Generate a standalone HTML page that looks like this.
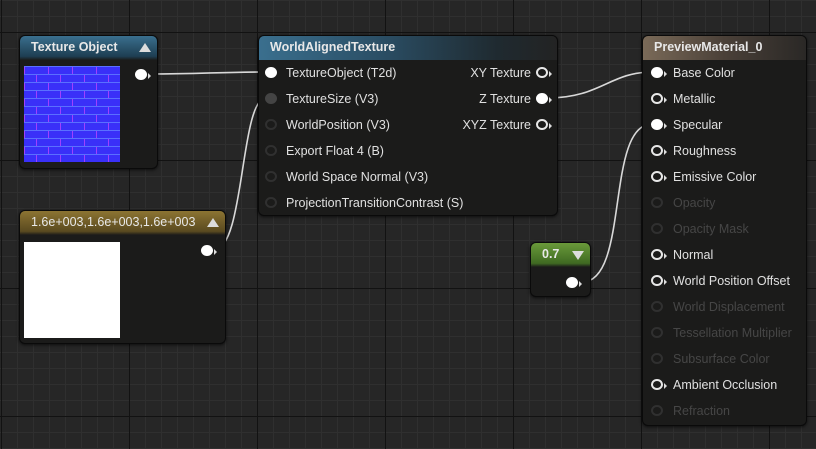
<!DOCTYPE html>
<html><head><style>
*{margin:0;padding:0;box-sizing:border-box}
body{width:816px;height:449px;overflow:hidden;position:relative;font-family:"Liberation Sans",sans-serif;
background-color:#262626;
background-image:
linear-gradient(to right,#121212 1px,transparent 1px),
linear-gradient(to bottom,#121212 1px,transparent 1px),
linear-gradient(to right,#2f2f2f 1px,transparent 1px),
linear-gradient(to bottom,#2f2f2f 1px,transparent 1px);
background-size:128px 128px,128px 128px,16px 16px,16px 16px;
background-position:1px 32px,1px 32px,1px 0,1px 0;}
.node{position:absolute;background:#1b1b1a;border:1px solid #0a0a0a;border-radius:6px;box-shadow:0 1px 3px rgba(0,0,0,.7);}
.hd{height:24px;border-radius:5px 5px 0 0;color:#e8e8e8;font-weight:bold;font-size:12.5px;line-height:23px;padding-left:11px;position:relative;}
.tri{position:absolute;right:6px;top:7px;width:0;height:0;border-left:6px solid transparent;border-right:6px solid transparent;border-bottom:9px solid #ddd}
.tri.d{border-bottom:0;border-top:9px solid #ddd}
.row{position:absolute;font-size:12.5px;color:#e0e0e0;height:16px;line-height:16px;white-space:nowrap}
.dim{color:#464646}
.pin{position:absolute;width:12px;height:11px;border-radius:50%;margin:-1px 0 0 -1px}
.f{background:#fff}
.o{border:2px solid #e8e8e8}
.g{background:#444}
.go{border:2px solid #303030}
.ar{position:absolute;width:0;height:0;border-top:3px solid transparent;border-bottom:3px solid transparent;border-left:3px solid #ddd}
.br{position:absolute;left:4px;width:96px;height:8px;background-color:#3a30f8;border-top:1px solid #5a70ff;background-image:linear-gradient(to right,#a040ff 1px,transparent 1px);background-size:24px 8px}
</style></head><body>
<svg width="816" height="449" style="position:absolute;left:0;top:0">
<g fill="none" stroke="#d8d8d8" stroke-width="1.6">
<path d="M150 74 C200 74,220 72,266 72"/>
<path d="M214 250 C245 250,240 98,266 98"/>
<path d="M548 98 C600 98,610 72,652 72"/>
<path d="M582 282 C630 282,605 124,652 124"/>
</g></svg>

<div class="node" style="left:19px;top:35px;width:139px;height:134px">
<div class="hd" style="background:linear-gradient(#3a6f8e,#1e3e52 85%,#1b1b1a)">Texture Object<div class="tri"></div></div>
<div class="br" style="top:30px"></div><div class="br" style="top:38px;background-position:12px 0"></div>
<div class="br" style="top:46px"></div><div class="br" style="top:54px;background-position:12px 0"></div>
<div class="br" style="top:62px"></div><div class="br" style="top:70px;background-position:12px 0"></div>
<div class="br" style="top:78px"></div><div class="br" style="top:86px;background-position:12px 0"></div>
<div class="br" style="top:94px"></div><div class="br" style="top:102px;background-position:12px 0"></div>
<div class="br" style="top:110px"></div><div class="br" style="top:118px;background-position:12px 0"></div>
<div class="pin f" style="left:116px;top:34px"></div><div class="ar" style="left:128px;top:37px"></div>
</div>

<div class="node" style="left:19px;top:210px;width:207px;height:134px">
<div class="hd" style="background:linear-gradient(#8c7432,#5a4a20 85%,#1b1b1a);font-weight:normal;padding-left:11px">1.6e+003,1.6e+003,1.6e+003<div class="tri"></div></div>
<div style="position:absolute;left:4px;top:31px;width:96px;height:96px;background:#fff"></div>
<div class="pin f" style="left:182px;top:35px"></div><div class="ar" style="left:194px;top:38px"></div>
</div>

<div class="node" style="left:258px;top:35px;width:300px;height:181px">
<div class="hd" style="background:linear-gradient(to right,#3a6f8e,#2b4f66 40%,#1f2a30 80%,#232323)">WorldAlignedTexture</div>
<div class="pin f" style="left:7px;top:32px"></div><div class="row" style="left:27px;top:29px">TextureObject (T2d)</div>
<div class="pin g" style="left:7px;top:58px"></div><div class="row" style="left:27px;top:55px">TextureSize (V3)</div>
<div class="pin go" style="left:7px;top:84px"></div><div class="row" style="left:27px;top:81px">WorldPosition (V3)</div>
<div class="pin go" style="left:7px;top:110px"></div><div class="row" style="left:27px;top:107px">Export Float 4 (B)</div>
<div class="pin go" style="left:7px;top:136px"></div><div class="row" style="left:27px;top:133px">World Space Normal (V3)</div>
<div class="pin go" style="left:7px;top:162px"></div><div class="row" style="left:27px;top:159px">ProjectionTransitionContrast (S)</div>
<div class="row" style="right:26px;top:29px">XY Texture</div><div class="pin o" style="left:278px;top:32px"></div><div class="ar" style="left:290px;top:35px"></div>
<div class="row" style="right:26px;top:55px">Z Texture</div><div class="pin f" style="left:278px;top:58px"></div><div class="ar" style="left:290px;top:61px"></div>
<div class="row" style="right:26px;top:81px">XYZ Texture</div><div class="pin o" style="left:278px;top:84px"></div><div class="ar" style="left:290px;top:87px"></div>
</div>

<div class="node" style="left:530px;top:242px;width:61px;height:55px">
<div class="hd" style="background:linear-gradient(#6a9a3a,#3f6a22 85%,#1b1b1a);padding-left:11px">0.7<div class="tri d" style="top:8px"></div></div>
<div class="pin f" style="left:36px;top:35px"></div><div class="ar" style="left:48px;top:38px"></div>
</div>

<div class="node" style="left:642px;top:35px;width:165px;height:391px">
<div class="hd" style="background:linear-gradient(to right,#7a6a58,#4a4038 50%,#2a2826);">PreviewMaterial_0</div>
<div class="pin f" style="left:9px;top:32px"></div><div class="ar" style="left:21px;top:35px"></div><div class="row" style="left:30px;top:29px">Base Color</div>
<div class="pin o" style="left:9px;top:58px"></div><div class="ar" style="left:21px;top:61px"></div><div class="row" style="left:30px;top:55px">Metallic</div>
<div class="pin f" style="left:9px;top:84px"></div><div class="ar" style="left:21px;top:87px"></div><div class="row" style="left:30px;top:81px">Specular</div>
<div class="pin o" style="left:9px;top:110px"></div><div class="ar" style="left:21px;top:113px"></div><div class="row" style="left:30px;top:107px">Roughness</div>
<div class="pin o" style="left:9px;top:136px"></div><div class="ar" style="left:21px;top:139px"></div><div class="row" style="left:30px;top:133px">Emissive Color</div>
<div class="pin go" style="left:9px;top:162px"></div><div class="row dim" style="left:30px;top:159px">Opacity</div>
<div class="pin go" style="left:9px;top:188px"></div><div class="row dim" style="left:30px;top:185px">Opacity Mask</div>
<div class="pin o" style="left:9px;top:214px"></div><div class="ar" style="left:21px;top:217px"></div><div class="row" style="left:30px;top:211px">Normal</div>
<div class="pin o" style="left:9px;top:240px"></div><div class="ar" style="left:21px;top:243px"></div><div class="row" style="left:30px;top:237px">World Position Offset</div>
<div class="pin go" style="left:9px;top:266px"></div><div class="row dim" style="left:30px;top:263px">World Displacement</div>
<div class="pin go" style="left:9px;top:292px"></div><div class="row dim" style="left:30px;top:289px">Tessellation Multiplier</div>
<div class="pin go" style="left:9px;top:318px"></div><div class="row dim" style="left:30px;top:315px">Subsurface Color</div>
<div class="pin o" style="left:9px;top:344px"></div><div class="ar" style="left:21px;top:347px"></div><div class="row" style="left:30px;top:341px">Ambient Occlusion</div>
<div class="pin go" style="left:9px;top:370px"></div><div class="row dim" style="left:30px;top:367px">Refraction</div>
</div>
</body></html>
